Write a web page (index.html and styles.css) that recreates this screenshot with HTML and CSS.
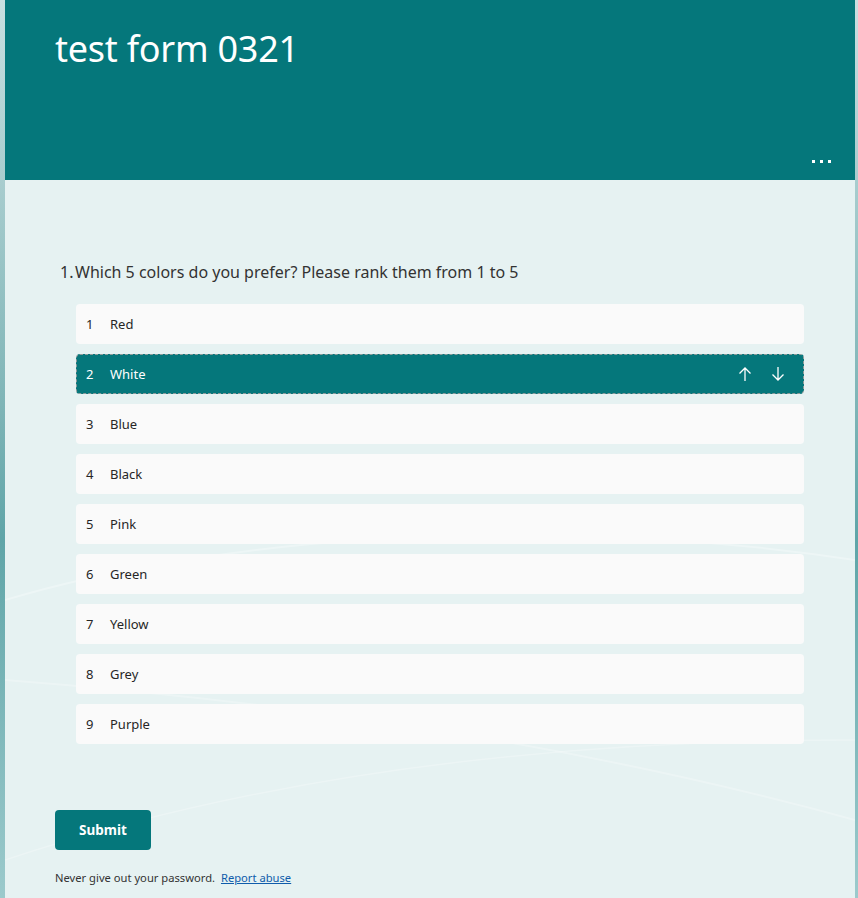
FILE: index.html
```html
<!DOCTYPE html>
<html lang="en">
<head>
<meta charset="utf-8">
<title>test form 0321</title>
<link rel="stylesheet" href="styles.css">
</head>
<body>
<div class="page">
  <div class="card">
    <svg class="swoosh" width="850" height="718" viewBox="0 0 850 718" preserveAspectRatio="none" aria-hidden="true">
      <path d="M0 420 C 200 360, 520 330, 850 380" fill="none" stroke="#ffffff" stroke-opacity="0.3" stroke-width="2"/>
      <path d="M0 500 C 260 520, 560 560, 850 640" fill="none" stroke="#ffffff" stroke-opacity="0.25" stroke-width="2"/>
      <path d="M0 680 C 240 600, 520 560, 850 560" fill="none" stroke="#ffffff" stroke-opacity="0.25" stroke-width="1.5"/>
    </svg>
    <header class="header">
      <h1 class="title">test form 0321</h1>
      <div class="more" aria-label="More options"><span></span><span></span><span></span></div>
    </header>
    <main class="body">
      <div class="question">
        <span class="qnum">1.</span><span class="qtext">Which 5 colors do you prefer? Please rank them from 1 to 5</span>
      </div>
      <ol class="ranks">
        <li class="rank"><span class="rnum">1</span><span class="rlabel">Red</span></li>
        <li class="rank active"><span class="rnum">2</span><span class="rlabel">White</span>
          <span class="arrows">
            <svg width="16" height="16" viewBox="0 0 16 16"><path d="M8 15V2M2.5 7.5L8 2l5.5 5.5" fill="none" stroke="#fff" stroke-width="1.3"/></svg>
            <svg width="16" height="16" viewBox="0 0 16 16"><path d="M8 1v13M2.5 8.5L8 14l5.5-5.5" fill="none" stroke="#fff" stroke-width="1.3"/></svg>
          </span>
        </li>
        <li class="rank"><span class="rnum">3</span><span class="rlabel">Blue</span></li>
        <li class="rank"><span class="rnum">4</span><span class="rlabel">Black</span></li>
        <li class="rank"><span class="rnum">5</span><span class="rlabel">Pink</span></li>
        <li class="rank"><span class="rnum">6</span><span class="rlabel">Green</span></li>
        <li class="rank"><span class="rnum">7</span><span class="rlabel">Yellow</span></li>
        <li class="rank"><span class="rnum">8</span><span class="rlabel">Grey</span></li>
        <li class="rank"><span class="rnum">9</span><span class="rlabel">Purple</span></li>
      </ol>
      <button class="submit">Submit</button>
      <p class="footer">Never give out your password. <a href="#" class="abuse">Report abuse</a></p>
    </main>
  </div>
</div>
</body>
</html>
```
FILE: styles.css
```css
* { box-sizing: border-box; }
html, body { margin: 0; padding: 0; }
body {
  font-family: "Noto Sans", "Open Sans", sans-serif;
  color: #333;
  background: linear-gradient(180deg, #c9e0e1 0%, #7fb5b7 45%, #5fa5a8 60%, #9ccacc 100%);
  height: 898px;
  overflow: hidden;
}
.page {
  padding: 0 3px 0 5px;
}
.card {
  position: relative;
  width: 850px;
  background: #e6f2f2;
  min-height: 898px;
}
.swoosh {
  position: absolute;
  left: 0;
  top: 180px;
  pointer-events: none;
}
.header {
  position: relative;
  height: 180px;
  background: #05777b;
  padding: 24px 50px 0;
}
.title {
  margin: 0;
  font-weight: 400;
  font-size: 36px;
  line-height: 50px;
  color: #fff;
  letter-spacing: -0.25px;
}
.more {
  position: absolute;
  left: 807px;
  top: 160px;
  display: flex;
  gap: 5.5px;
}
.more span {
  width: 2.5px;
  height: 2.5px;
  background: #fff;
}
.body {
  position: relative;
  padding: 80px 50px 0;
}
.question {
  display: flex;
  font-size: 16px;
  line-height: 24px;
  color: #333;
  padding-left: 5px;
}
.qnum { width: 15px; }
.ranks {
  list-style: none;
  margin: 20px 0 0 21px;
  padding: 0;
  width: 728px;
  display: flex;
  flex-direction: column;
  gap: 10px;
}
.rank {
  display: flex;
  align-items: center;
  height: 40px;
  background: #fafafa;
  border-radius: 4px;
  font-size: 13px;
  color: #262626;
  padding-left: 9px;
  border: 1px solid transparent;
}
.rnum { width: 24px; }
.rank.active {
  background: #05777b;
  color: #fff;
  border: 1px dashed #8f9b9b;
}
.arrows {
  margin-left: auto;
  margin-right: 17px;
  display: flex;
  gap: 17px;
}
.arrows svg { display: block; }
.submit {
  margin-top: 66px;
  width: 96px;
  height: 40px;
  border: none;
  border-radius: 4px;
  background: #05777b;
  color: #fff;
  font-family: inherit;
  font-weight: 700;
  font-size: 13.5px;
  cursor: pointer;
}
.footer {
  margin: 20px 0 0;
  font-size: 11.2px;
  color: #333;
}
.abuse {
  color: #0f5cab;
  margin-left: 3px;
}
```
